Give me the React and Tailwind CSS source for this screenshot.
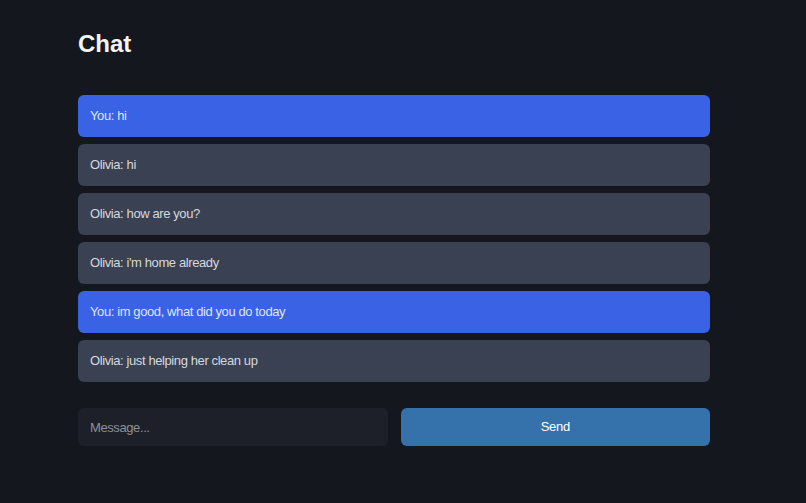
import React from "react";

const messages = [
  { who: "You", text: "hi" },
  { who: "Olivia", text: "hi" },
  { who: "Olivia", text: "how are you?" },
  { who: "Olivia", text: "i'm home already" },
  { who: "You", text: "im good, what did you do today" },
  { who: "Olivia", text: "just helping her clean up" },
];

export default function App() {
  return (
    <div
      className="min-h-[503px] w-full bg-[#15171e] pt-[28px] pl-[78px]"
      style={{ fontFamily: "'Liberation Sans', Arial, sans-serif" }}
    >
      <div className="w-[632px]">
        <h1 className="text-2xl leading-8 font-bold text-[#f3f4f6]">Chat</h1>
        <div className="mt-[35px] flex flex-col gap-[7px]">
          {messages.map((m, i) => (
            <div
              key={i}
              className={
                m.who === "You"
                  ? "flex h-[42px] items-center rounded-md bg-[#3a62e4] px-3 text-[13px] tracking-[-0.4px] text-[#dfe5f7]"
                  : "flex h-[42px] items-center rounded-md bg-[#394152] px-3 text-[13px] tracking-[-0.4px] text-[#d6d9de]"
              }
            >
              {m.who}: {m.text}
            </div>
          ))}
        </div>
        <div className="mt-[26px] grid grid-cols-2 gap-[13px]">
          <input
            placeholder="Message..."
            className="h-[38px] rounded-md bg-[#1e2029] px-3 text-[13px] tracking-[-0.4px] text-gray-200 placeholder:text-[#8b909a] outline-none"
          />
          <button className="h-[38px] rounded-md bg-[#3572ab] text-[13px] tracking-[-0.3px] text-white">
            Send
          </button>
        </div>
      </div>
    </div>
  );
}
